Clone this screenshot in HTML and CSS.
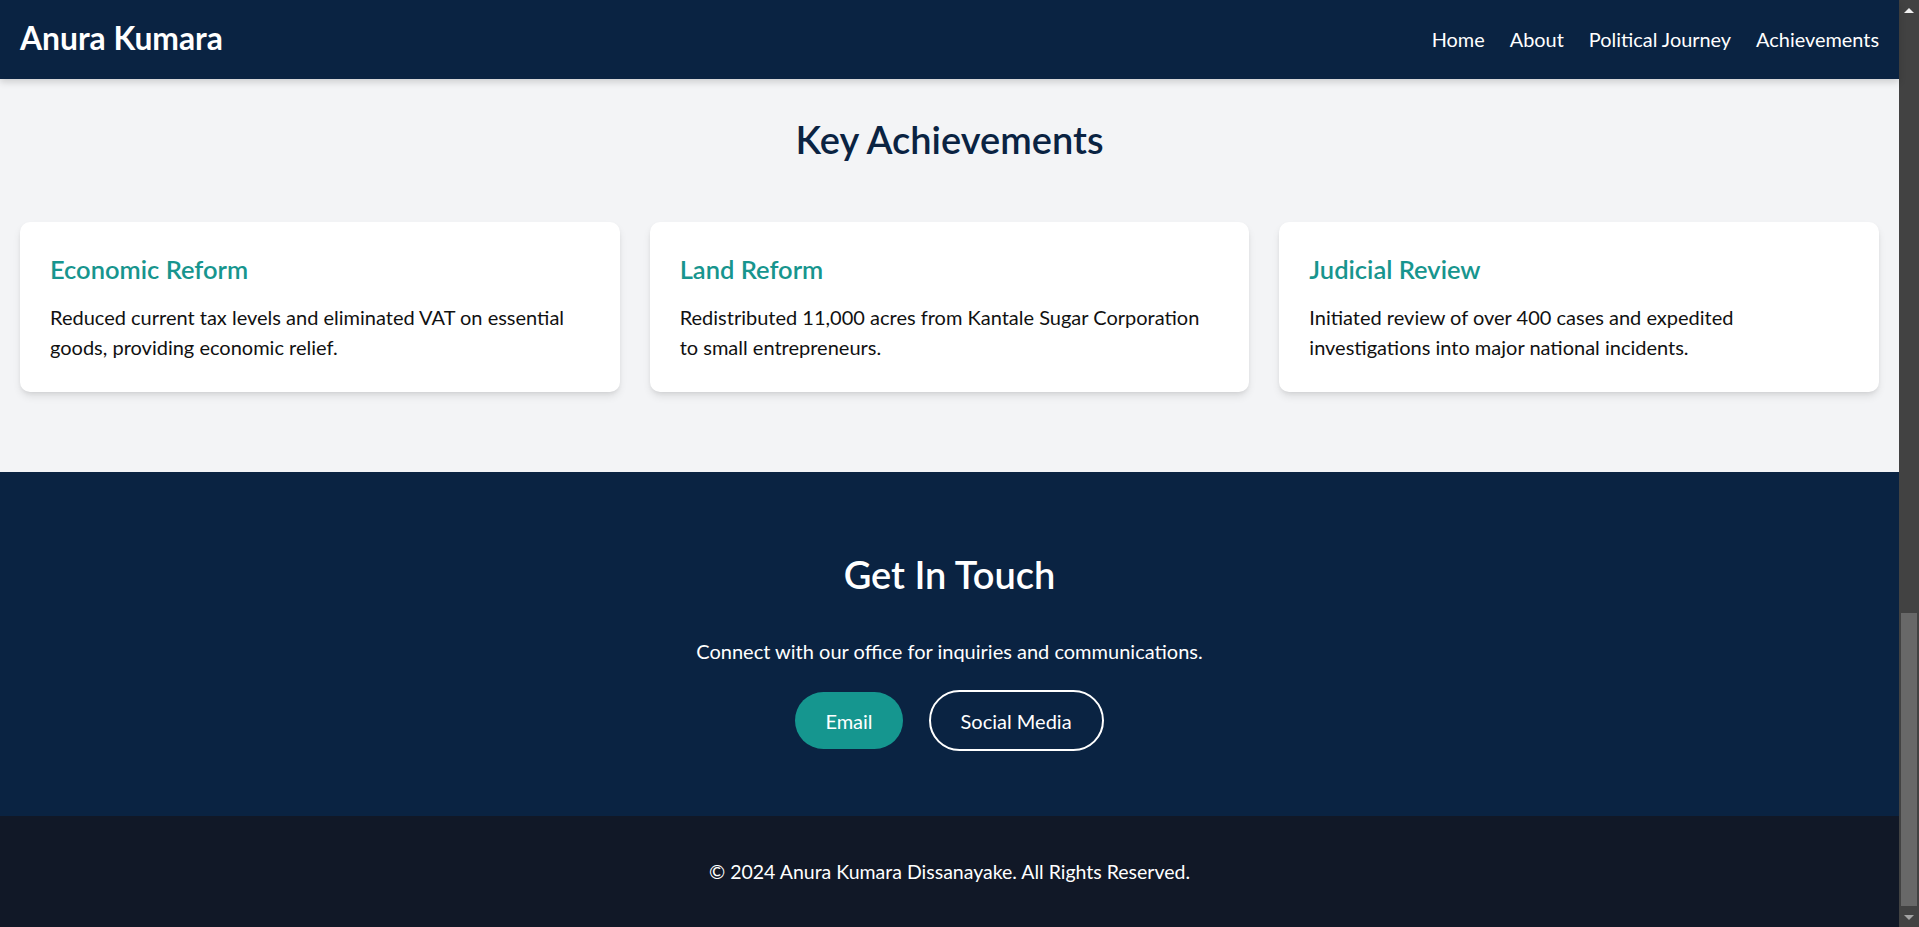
FILE: index.html
```html
<!DOCTYPE html>
<html lang="en">
<head>
<meta charset="utf-8">
<title>Anura Kumara</title>
<link rel="stylesheet" href="styles.css">
</head>
<body>
<div class="shell">
  <div class="page">
    <header class="nav">
      <a class="brand" href="#">Anura Kumara</a>
      <nav class="links">
        <a href="#">Home</a>
        <a href="#">About</a>
        <a href="#">Political Journey</a>
        <a href="#">Achievements</a>
      </nav>
    </header>

    <section class="achievements">
      <h2 class="section-title">Key Achievements</h2>
      <div class="cards">
        <article class="card">
          <h3 class="card-title">Economic Reform</h3>
          <p class="card-text">Reduced current tax levels and eliminated VAT on essential goods, providing economic relief.</p>
        </article>
        <article class="card">
          <h3 class="card-title">Land Reform</h3>
          <p class="card-text">Redistributed 11,000 acres from Kantale Sugar Corporation to small entrepreneurs.</p>
        </article>
        <article class="card">
          <h3 class="card-title">Judicial Review</h3>
          <p class="card-text">Initiated review of over 400 cases and expedited investigations into major national incidents.</p>
        </article>
      </div>
    </section>

    <section class="contact">
      <h2 class="contact-title">Get In Touch</h2>
      <p class="contact-text">Connect with our office for inquiries and communications.</p>
      <div class="actions">
        <a class="btn btn-fill" href="#">Email</a>
        <a class="btn btn-outline" href="#">Social Media</a>
      </div>
    </section>

    <footer class="footer">
      <p>© 2024 Anura Kumara Dissanayake. All Rights Reserved.</p>
    </footer>
  </div>

  <div class="scrollbar" aria-hidden="true">
    <div class="sb-btn sb-up"><span class="tri-up"></span></div>
    <div class="sb-track"><div class="sb-thumb"></div></div>
    <div class="sb-btn sb-down"><span class="tri-down"></span></div>
  </div>
</div>
</body>
</html>
```
FILE: styles.css
```css
* { box-sizing: border-box; }
html, body { margin: 0; padding: 0; }
body {
  font-family: "Lato", "Open Sans", sans-serif;
  background: #111827;
  color: #1a1a1a;
  height: 927px;
  overflow: hidden;
}
a { text-decoration: none; color: inherit; }
h2, h3, p { margin: 0; }

.shell {
  display: flex;
  height: 927px;
}
.page {
  flex: 1;
  display: flex;
  flex-direction: column;
  min-width: 0;
}

/* Nav */
.nav {
  position: relative;
  z-index: 2;
  height: 79px;
  flex: none;
  background: #0a2342;
  display: flex;
  align-items: center;
  justify-content: space-between;
  padding: 0 20px;
  box-shadow: 0 3px 7px rgba(0, 0, 0, 0.16);
}
.brand {
  color: #fff;
  font-weight: 700;
  font-size: 31.8px;
  line-height: 1;
  padding-bottom: 2px;
}
.links {
  display: flex;
  gap: 25px;
}
.links a {
  color: #fff;
  font-size: 19.9px;
  line-height: 1;
}

/* Achievements */
.achievements {
  background: #f3f4f6;
  padding: 38px 20px 80px;
  flex: none;
}
.section-title {
  text-align: center;
  color: #0a2342;
  font-size: 38px;
  font-weight: 600;
  line-height: 1.2;
  margin-bottom: 59px;
}
.cards {
  display: grid;
  grid-template-columns: repeat(3, 1fr);
  gap: 30px;
}
.card {
  background: #fff;
  border-radius: 10px;
  padding: 30px;
  height: 170px;
  box-shadow: 0 5px 8px -1px rgba(0, 0, 0, 0.1), 0 2px 5px -2px rgba(0, 0, 0, 0.1);
}
.card-title {
  color: #17958e;
  font-size: 25.5px;
  font-weight: 600;
  line-height: 35px;
  margin-bottom: 15px;
}
.card-text {
  font-size: 20px;
  line-height: 30px;
  color: #111;
}

/* Contact */
.contact {
  background: #0a2342;
  color: #fff;
  text-align: center;
  padding: 80px 20px 0;
  height: 344px;
  flex: none;
}
.contact-title {
  font-size: 38px;
  font-weight: 600;
  line-height: 1.2;
  margin-bottom: 39px;
}
.contact-text {
  font-size: 20px;
  line-height: 30px;
  margin-bottom: 24px;
}
.actions {
  display: flex;
  justify-content: center;
  align-items: center;
  gap: 26px;
}
.btn {
  display: inline-block;
  font-size: 20px;
  line-height: 30px;
  color: #fff;
  border-radius: 999px;
  padding: 13.5px 30px;
}
.btn-fill {
  background: #15968f;
}
.btn-outline {
  border: 2px solid #fff;
  padding: 13.5px 30px;
}

/* Footer */
.footer {
  flex: 1;
  background: #111827;
  color: #fff;
  text-align: center;
  display: flex;
  align-items: center;
  justify-content: center;
  padding-top: 2px;
}
.footer p {
  font-size: 19.5px;
  line-height: 30px;
}

/* Scrollbar */
.scrollbar {
  width: 20px;
  flex: none;
  background: #424242;
  display: flex;
  flex-direction: column;
}
.sb-btn {
  height: 20px;
  flex: none;
  display: flex;
  align-items: center;
  justify-content: center;
}
.sb-track {
  flex: 1;
  display: flex;
  flex-direction: column;
  justify-content: flex-end;
  padding: 0 2px 1px;
}
.sb-thumb {
  height: 293px;
  background: #686868;
}
.tri-up {
  width: 0; height: 0;
  border-left: 5px solid transparent;
  border-right: 5px solid transparent;
  border-bottom: 5px solid #f0f0f0;
}
.tri-down {
  width: 0; height: 0;
  border-left: 5px solid transparent;
  border-right: 5px solid transparent;
  border-top: 5px solid #a3a3a3;
}
```
